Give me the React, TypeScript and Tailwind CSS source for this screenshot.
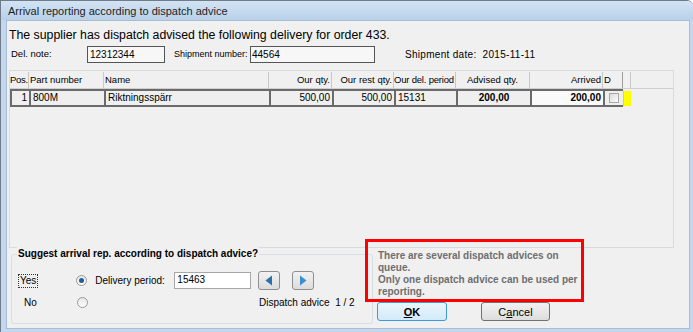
import React from 'react';

const FONT = { fontFamily: '"Liberation Sans", Arial, sans-serif' };

const cols = [
  { key: 'pos', label: 'Pos.', w: 'w-[19px]', align: 'text-right px-[2px]', head: 'text-left px-0 tracking-[-0.3px]' },
  { key: 'part', label: 'Part number', w: 'w-[75px]', align: 'text-left px-[2px]', head: 'text-left px-[1px]' },
  { key: 'name', label: 'Name', w: 'w-[165px]', align: 'text-left px-[2px]', head: 'text-left px-[1px]' },
  { key: 'qty', label: 'Our qty.', w: 'w-[63px]', align: 'text-right px-[2px]', head: 'text-right px-[1px]' },
  { key: 'rest', label: 'Our rest qty.', w: 'w-[62px]', align: 'text-right px-[2px]', head: 'text-right px-[1px]' },
  { key: 'period', label: 'Our del. period', w: 'w-[62px]', align: 'text-left px-[2px]', head: 'text-left px-0 tracking-[-0.2px]' },
  { key: 'advised', label: 'Advised qty.', w: 'w-[74px]', align: 'text-center font-bold px-[2px]', head: 'text-center px-[1px]' },
  { key: 'arrived', label: 'Arrived', w: 'w-[73px]', align: 'text-right font-bold px-[2px]', head: 'text-right px-[1px]' },
];

const row: Record<string, string> = {
  pos: '1',
  part: '800M',
  name: 'Riktningsspärr',
  qty: '500,00',
  rest: '500,00',
  period: '15131',
  advised: '200,00',
  arrived: '200,00',
};

function Radio({ checked }: { checked?: boolean }) {
  return (
    <span className="w-[11px] h-[11px] rounded-full border border-[#9a9a9a] bg-gradient-to-b from-[#e6e6e6] to-[#ffffff] flex items-center justify-center">
      {checked && <span className="w-[5px] h-[5px] rounded-full bg-[#1d5f9c]" />}
    </span>
  );
}

function Arrow({ dir }: { dir: 'left' | 'right' }) {
  return (
    <button className="w-[22px] h-[19px] rounded-[3px] border border-[#8e8f8f] bg-gradient-to-b from-[#f2f2f2] to-[#dcdcdc] flex items-center justify-center">
      <svg width="8" height="11" viewBox="0 0 8 11">
        {dir === 'left' ? (
          <path d="M7 0.5 L0.5 5.5 L7 10.5 Z" fill="#2b6fb0" />
        ) : (
          <path d="M1 0.5 L7.5 5.5 L1 10.5 Z" fill="#3a8fd0" />
        )}
      </svg>
    </button>
  );
}

export default function App() {
  return (
    <div className="w-[693px] h-[332px] bg-[#c3d8ee] border-l border-t border-[#6d7b8a] rounded-tr-[6px] overflow-hidden flex flex-col text-[#000]" style={FONT}>
      {/* title bar */}
      <div className="h-[19px] shrink-0 flex items-center pl-[7px] pt-[1px] text-[11px] text-[#1e1e1e] bg-gradient-to-b from-[#d3e3f3] to-[#b9d0e9]">
        Arrival reporting according to dispatch advice
      </div>

      <div className="flex-1 ml-[5px] mr-[3px] mb-[3px] bg-[#f0f0f0] border border-[#a8bdd3] relative flex flex-col">
        <div className="pl-[2px] pt-[6px] text-[12.3px] leading-[16px]">
          The supplier has dispatch advised the following delivery for order 433.
        </div>

        {/* header fields */}
        <div className="flex items-center mt-[3px] h-[17px] text-[10px] whitespace-nowrap">
          <span className="ml-[4px] w-[76px] text-[9.5px]">Del. note:</span>
          <div className="w-[78px] h-[17px] border border-[#555] bg-[#f7f7f7] pl-[2px] leading-[15px]">12312344</div>
          <span className="ml-[9px] w-[76px] text-[9px]">Shipment number:</span>
          <div className="w-[125px] h-[17px] border border-[#555] bg-[#f7f7f7] pl-[1px] leading-[15px]">44564</div>
          <span className="ml-[30px] tracking-[0.3px]">Shipment date:&nbsp; 2015-11-11</span>
        </div>

        {/* grid panel */}
        <div className="ml-[2px] mt-[7px] w-[665px] h-[178px] border border-[#dadada] pt-[1px] text-[9.5px]">
          <div className="flex h-[17px] border-b border-[#cfcfcf]">
            {cols.map(c => (
              <div key={c.key} className={`${c.w} ${c.head} shrink-0 border-r border-[#c8c8c8] leading-[16px] whitespace-nowrap overflow-hidden bg-[#f0f0f0]`}>
                {c.label}
              </div>
            ))}
            <div className="w-[20px] shrink-0 border-r border-[#a0a0a0] leading-[16px] pl-[1px]">D</div>
            <div className="w-[8px] shrink-0 border-r border-[#c8c8c8]" />
          </div>
          <div className="flex h-[18px] text-[10px]">
            {cols.map(c => (
              <div
                key={c.key}
                className={`${c.w} ${c.align} shrink-0 border-t-2 border-b-2 border-l-2 border-[#6a6a6a] leading-[14px] whitespace-nowrap overflow-hidden ${c.key === 'arrived' ? 'bg-[#fafafa]' : 'bg-[#efefef]'}`}
              >
                {row[c.key]}
              </div>
            ))}
            <div className="w-[20px] shrink-0 border-t-2 border-b-2 border-l-2 border-[#6a6a6a] flex items-center justify-center bg-[#efefef]">
              <span className="w-[10px] h-[10px] border border-[#a8a8a8] bg-gradient-to-br from-[#dcdcdc] to-[#fbfbfb]" />
            </div>
            <div className="w-[8px] shrink-0 bg-[#ffff00] mt-[2px] h-[15px] border-l border-[#c8c8c8]" />
          </div>
        </div>

        {/* bottom area */}
        <div className="flex mt-[6px]">
          <div className="ml-[4px] w-[362px] h-[70px] border border-[#d5dfe5] rounded-[3px] relative text-[10px]">
            <div className="absolute -top-[8px] left-[5px] px-[1px] bg-[#f0f0f0] font-bold text-[10px] leading-[14px]">
              Suggest arrival rep. according to dispatch advice?
            </div>
            <div className="flex items-center mt-[16px] h-[19px]">
              <span className="ml-[6px] px-[1px] border border-dotted border-[#333] leading-[12px]">Yes</span>
              <span className="ml-[38px]"><Radio checked /></span>
              <span className="ml-[8px] w-[79px]">Delivery period:</span>
              <div className="w-[77px] h-[17px] border border-[#a7a7a7] bg-white pl-[2px] leading-[14px]">15463</div>
              <span className="ml-[7px]"><Arrow dir="left" /></span>
              <span className="ml-[12px]"><Arrow dir="right" /></span>
            </div>
            <div className="flex items-center mt-[5px] h-[14px]">
              <span className="ml-[12px] w-[53px]">No</span>
              <Radio />
              <span className="ml-[171px]">Dispatch advice&nbsp; 1 / 2</span>
            </div>
          </div>

          <div className="flex-1 flex flex-col -mt-[4px]">
            <div className="ml-[5px] w-[205px] text-[10px] leading-[12px] font-bold text-[#6e6e6e]">
              There are several dispatch advices on
              <br />
              queue.
              <br />
              Only one dispatch advice can be used per
              <br />
              reporting.
            </div>
            <div className="flex mt-[4px] ml-[4px] text-[11px]">
              <button className="w-[70px] h-[19px] rounded-[3px] border border-[#3c9ad6] bg-gradient-to-b from-[#eaf6fd] to-[#d2eaf9] font-bold leading-[16px]">
                <span className="underline">O</span>K
              </button>
              <button className="ml-[34px] w-[69px] h-[19px] rounded-[3px] border border-[#707070] bg-gradient-to-b from-[#f2f2f2] to-[#dddddd] leading-[16px]">
                C<span className="underline">a</span>ncel
              </button>
            </div>
          </div>
        </div>

        {/* annotation */}
        <div className="absolute left-[358px] top-[218px] w-[219px] h-[63px] border-[3px] border-[#ff0000] pointer-events-none" />
      </div>
    </div>
  );
}
